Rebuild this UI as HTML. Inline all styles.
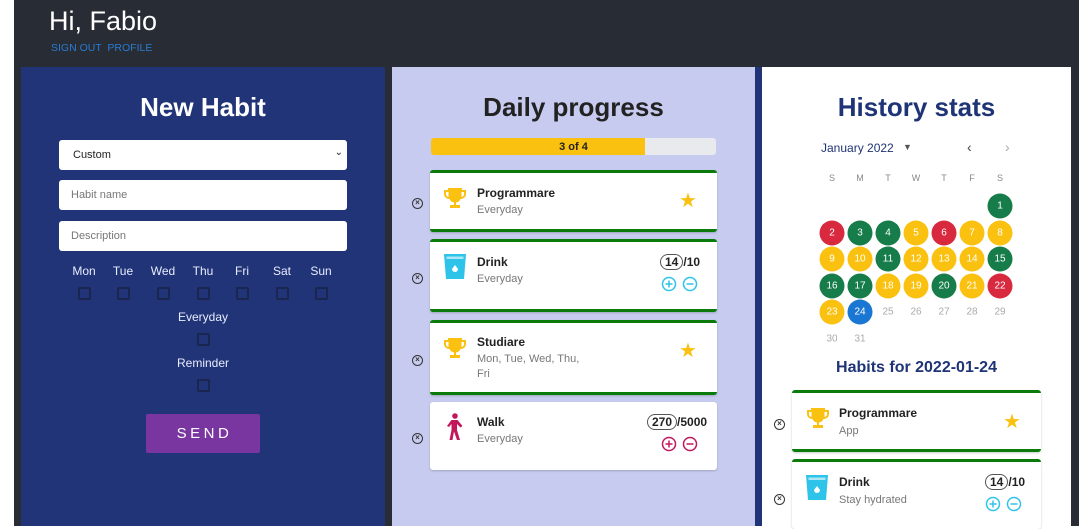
<!DOCTYPE html>
<html><head><meta charset="utf-8"><style>
*{box-sizing:border-box;margin:0;padding:0}
body{width:1079px;height:526px;overflow:hidden;background:#fff;font-family:"Liberation Sans",sans-serif;position:relative}
.a{position:absolute}
.hdr{left:14px;top:0;width:1065px;height:526px;background:#282c34}
.cb{width:13px;height:13px;border:2px solid #1a2550;border-radius:2px;position:absolute;background:#213477}
.lbl{color:#e8ecff;font-size:12px;position:absolute;transform:translateX(-50%)}
.inp{position:absolute;left:59px;width:288px;height:30px;background:#fff;border-radius:3px;font-size:11px;color:#777;padding:9px 12px}
.card{position:absolute;background:#fff;border-radius:3px;box-shadow:0 1px 2px rgba(0,0,0,.2)}
.gt{border-top:3px solid #0a7a0a}.gb{border-bottom:3px solid #0a7a0a}
.t{position:absolute;font-size:12px;font-weight:bold;color:#222}
.s{position:absolute;font-size:11px;color:#777;line-height:15px}
.x{position:absolute;width:11px;height:11px;border:1.5px solid #333;border-radius:50%;font-size:8px;line-height:8px;text-align:center;color:#333;font-weight:bold}
.day{position:absolute;width:25px;height:25px;border-radius:50%;color:#fff;font-size:10px;text-align:center;line-height:25px;transform:translate(-50%,-50%)}
.g{background:#167c4a}.r{background:#d8293e}.y{background:#fbc110}.b{background:#1976d2}
.e{color:#aaa}
.wd{position:absolute;font-size:9px;color:#888;transform:translateX(-50%)}
.cnt{position:absolute;font-size:12px;font-weight:bold;color:#222}
.cnt span{border:1px solid #555;border-radius:8px;padding:0 4px}
</style></head><body>
<div class="a hdr"></div>
<div class="a" style="left:49px;top:6px;font-size:27px;color:#fff">Hi, Fabio</div>
<div class="a" style="left:51px;top:42px;font-size:10.5px;color:#2a7bd2">SIGN OUT &nbsp;PROFILE</div>

<div class="a" style="left:21px;top:67px;width:364px;height:459px;background:#213477"></div>
<div class="a" style="left:21px;top:92px;width:364px;text-align:center;font-size:26px;font-weight:bold;color:#fff">New Habit</div>
<div class="inp" style="top:140px;color:#222;padding-left:14px">Custom<span style="position:absolute;right:4px;top:7px;font-size:10px">⌄</span></div>
<div class="inp" style="top:180px">Habit name</div>
<div class="inp" style="top:221px">Description</div>
<div class="lbl" style="left:84px;top:264px">Mon</div><div class="lbl" style="left:123px;top:264px">Tue</div><div class="lbl" style="left:163px;top:264px">Wed</div><div class="lbl" style="left:203px;top:264px">Thu</div><div class="lbl" style="left:242px;top:264px">Fri</div><div class="lbl" style="left:282px;top:264px">Sat</div><div class="lbl" style="left:321px;top:264px">Sun</div>
<div class="cb" style="left:78px;top:287px"></div><div class="cb" style="left:117px;top:287px"></div><div class="cb" style="left:157px;top:287px"></div><div class="cb" style="left:197px;top:287px"></div><div class="cb" style="left:236px;top:287px"></div><div class="cb" style="left:276px;top:287px"></div><div class="cb" style="left:315px;top:287px"></div>
<div class="lbl" style="left:203px;top:310px">Everyday</div>
<div class="cb" style="left:197px;top:333px"></div>
<div class="lbl" style="left:203px;top:356px">Reminder</div>
<div class="cb" style="left:197px;top:379px"></div>
<div class="a" style="left:146px;top:414px;width:114px;height:39px;background:#7a36a0;border-radius:2px;color:#fff;font-size:15px;letter-spacing:3.5px;text-align:center;line-height:39px;padding-left:3px">SEND</div>

<div class="a" style="left:392px;top:67px;width:363px;height:459px;background:#c7cbef"></div>
<div class="a" style="left:392px;top:92px;width:363px;text-align:center;font-size:26px;font-weight:bold;color:#222">Daily progress</div>
<div class="a" style="left:431px;top:138px;width:285px;height:17px;background:#e8eaee;border-radius:3px"></div>
<div class="a" style="left:431px;top:138px;width:214px;height:17px;background:#fbc110;border-radius:3px 0 0 3px"></div>
<div class="a" style="left:431px;top:141px;width:285px;text-align:center;font-size:11px;font-weight:bold;color:#222">3 of 4</div>

<div class="card gt gb" style="left:430px;top:170px;width:287px;height:62px"></div>
<div class="card gt gb" style="left:430px;top:239px;width:287px;height:73px"></div>
<div class="card gt gb" style="left:430px;top:320px;width:287px;height:75px"></div>
<div class="card" style="left:430px;top:402px;width:287px;height:68px"></div>
<div class="x" style="left:412px;top:198px">×</div><div class="x" style="left:412px;top:273px">×</div><div class="x" style="left:412px;top:355px">×</div><div class="x" style="left:412px;top:433px">×</div>

<svg class="a" style="left:443px;top:186px" width="24" height="24" viewBox="0 0 24 24"><path fill="#fbc110" d="M5 2h14v2h4v4a5 5 0 0 1-5 5h-.5A6 6 0 0 1 13 16.5V19h4v3H7v-3h4v-2.5A6 6 0 0 1 6.5 13H6a5 5 0 0 1-5-5V4h4zM3 6v2a3 3 0 0 0 2.5 3V6zm18 0h-2.5v5A3 3 0 0 0 21 8z"/></svg>
<div class="t" style="left:477px;top:186px">Programmare</div><div class="s" style="left:477px;top:203px">Everyday</div>
<div class="a" style="left:679px;top:188px;color:#fbc110;font-size:20px">★</div>

<svg class="a" style="left:444px;top:254px" width="22" height="25" viewBox="0 0 22 25"><path fill="#2ec3e8" d="M0 0h22l-2 25H2z"/><path fill="#fff" d="M2.5 2.5h17v2.5h-17z" opacity=".6"/><path fill="#fff" d="M11 11l3 4a3 3 0 1 1-6 0z"/></svg>
<div class="t" style="left:477px;top:255px">Drink</div><div class="s" style="left:477px;top:272px">Everyday</div>
<div class="cnt" style="left:660px;top:255px"><span>14</span>/10</div>
<svg class="a" style="left:661px;top:276px" width="40" height="16"><g fill="none" stroke="#2ec3e8" stroke-width="1.5"><circle cx="8" cy="8" r="6.5"/><path d="M4.5 8h7M8 4.5v7"/><circle cx="29" cy="8" r="6.5"/><path d="M25.5 8h7"/></g></svg>

<svg class="a" style="left:443px;top:336px" width="24" height="24" viewBox="0 0 24 24"><path fill="#fbc110" d="M5 2h14v2h4v4a5 5 0 0 1-5 5h-.5A6 6 0 0 1 13 16.5V19h4v3H7v-3h4v-2.5A6 6 0 0 1 6.5 13H6a5 5 0 0 1-5-5V4h4zM3 6v2a3 3 0 0 0 2.5 3V6zm18 0h-2.5v5A3 3 0 0 0 21 8z"/></svg>
<div class="t" style="left:477px;top:335px">Studiare</div><div class="s" style="left:477px;top:352px">Mon, Tue, Wed, Thu,<br>Fri</div>
<div class="a" style="left:679px;top:338px;color:#fbc110;font-size:20px">★</div>

<svg class="a" style="left:445px;top:413px" width="20" height="27" viewBox="0 0 20 27"><g fill="#c2185b"><circle cx="10" cy="3" r="2.8"/><path d="M6.5 7h6l5 6-2 1.5-3.5-3.5v6l3 10h-3l-3-8.5L7.5 27H4.5l2-10V11L4 14 2 13z"/></g></svg>
<div class="t" style="left:477px;top:415px">Walk</div><div class="s" style="left:477px;top:432px">Everyday</div>
<div class="cnt" style="left:647px;top:415px"><span>270</span>/5000</div>
<svg class="a" style="left:661px;top:436px" width="40" height="16"><g fill="none" stroke="#c2185b" stroke-width="1.5"><circle cx="8" cy="8" r="6.5"/><path d="M4.5 8h7M8 4.5v7"/><circle cx="29" cy="8" r="6.5"/><path d="M25.5 8h7"/></g></svg>

<div class="a" style="left:755px;top:67px;width:7px;height:459px;background:#213477"></div>
<div class="a" style="left:762px;top:67px;width:309px;height:459px;background:#fff"></div>
<div class="a" style="left:762px;top:92px;width:309px;text-align:center;font-size:26px;font-weight:bold;color:#1f3476">History stats</div>
<div class="a" style="left:821px;top:141px;font-size:12px;color:#1f3476">January 2022</div>
<div class="a" style="left:903px;top:142px;font-size:9px;color:#555">▼</div>
<div class="a" style="left:967px;top:139px;font-size:14px;color:#444">‹</div>
<div class="a" style="left:1005px;top:139px;font-size:14px;color:#aaa">›</div>
<div class="wd" style="left:832px;top:173px">S</div><div class="wd" style="left:860px;top:173px">M</div><div class="wd" style="left:888px;top:173px">T</div><div class="wd" style="left:916px;top:173px">W</div><div class="wd" style="left:944px;top:173px">T</div><div class="wd" style="left:972px;top:173px">F</div><div class="wd" style="left:1000px;top:173px">S</div>
<div class="day g" style="left:1000px;top:206px">1</div>
<div class="day r" style="left:832px;top:233px">2</div><div class="day g" style="left:860px;top:233px">3</div><div class="day g" style="left:888px;top:233px">4</div><div class="day y" style="left:916px;top:233px">5</div><div class="day r" style="left:944px;top:233px">6</div><div class="day y" style="left:972px;top:233px">7</div><div class="day y" style="left:1000px;top:233px">8</div>
<div class="day y" style="left:832px;top:259px">9</div><div class="day y" style="left:860px;top:259px">10</div><div class="day g" style="left:888px;top:259px">11</div><div class="day y" style="left:916px;top:259px">12</div><div class="day y" style="left:944px;top:259px">13</div><div class="day y" style="left:972px;top:259px">14</div><div class="day g" style="left:1000px;top:259px">15</div>
<div class="day g" style="left:832px;top:286px">16</div><div class="day g" style="left:860px;top:286px">17</div><div class="day y" style="left:888px;top:286px">18</div><div class="day y" style="left:916px;top:286px">19</div><div class="day g" style="left:944px;top:286px">20</div><div class="day y" style="left:972px;top:286px">21</div><div class="day r" style="left:1000px;top:286px">22</div>
<div class="day y" style="left:832px;top:312px">23</div><div class="day b" style="left:860px;top:312px">24</div><div class="day e" style="left:888px;top:312px">25</div><div class="day e" style="left:916px;top:312px">26</div><div class="day e" style="left:944px;top:312px">27</div><div class="day e" style="left:972px;top:312px">28</div><div class="day e" style="left:1000px;top:312px">29</div>
<div class="day e" style="left:832px;top:339px">30</div><div class="day e" style="left:860px;top:339px">31</div>
<div class="a" style="left:762px;top:359px;width:309px;text-align:center;font-size:16px;font-weight:bold;color:#1f3476">Habits for 2022-01-24</div>

<div class="card gt gb" style="left:792px;top:390px;width:249px;height:62px"></div>
<div class="card gt" style="left:792px;top:459px;width:249px;height:70px"></div>
<div class="x" style="left:774px;top:419px">×</div><div class="x" style="left:774px;top:494px">×</div>
<svg class="a" style="left:806px;top:406px" width="24" height="24" viewBox="0 0 24 24"><path fill="#fbc110" d="M5 2h14v2h4v4a5 5 0 0 1-5 5h-.5A6 6 0 0 1 13 16.5V19h4v3H7v-3h4v-2.5A6 6 0 0 1 6.5 13H6a5 5 0 0 1-5-5V4h4zM3 6v2a3 3 0 0 0 2.5 3V6zm18 0h-2.5v5A3 3 0 0 0 21 8z"/></svg>
<div class="t" style="left:839px;top:406px">Programmare</div><div class="s" style="left:839px;top:424px">App</div>
<div class="a" style="left:1003px;top:409px;color:#fbc110;font-size:20px">★</div>
<svg class="a" style="left:806px;top:475px" width="22" height="25" viewBox="0 0 22 25"><path fill="#2ec3e8" d="M0 0h22l-2 25H2z"/><path fill="#fff" d="M2.5 2.5h17v2.5h-17z" opacity=".6"/><path fill="#fff" d="M11 11l3 4a3 3 0 1 1-6 0z"/></svg>
<div class="t" style="left:839px;top:475px">Drink</div><div class="s" style="left:839px;top:493px">Stay hydrated</div>
<div class="cnt" style="left:985px;top:475px"><span>14</span>/10</div>
<svg class="a" style="left:985px;top:496px" width="40" height="16"><g fill="none" stroke="#2ec3e8" stroke-width="1.5"><circle cx="8" cy="8" r="6.5"/><path d="M4.5 8h7M8 4.5v7"/><circle cx="29" cy="8" r="6.5"/><path d="M25.5 8h7"/></g></svg>
</body></html>
